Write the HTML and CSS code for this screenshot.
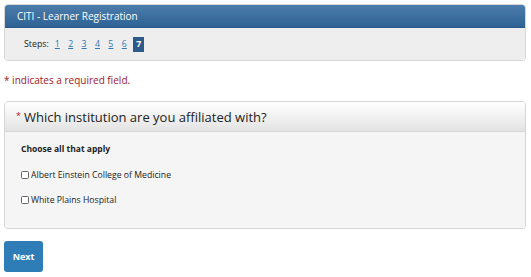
FILE: index.html
```html
<!DOCTYPE html>
<html lang="en">
<head>
<meta charset="utf-8">
<title>CITI - Learner Registration</title>
<link rel="stylesheet" href="styles.css">
</head>
<body>
<div class="page">
  <section class="panel panel-primary">
    <div class="panel-heading">CITI - Learner Registration</div>
    <div class="steps">
      <span class="steps-label">Steps:</span>
      <a class="step" href="#">1</a>
      <a class="step" href="#">2</a>
      <a class="step" href="#">3</a>
      <a class="step" href="#">4</a>
      <a class="step" href="#">5</a>
      <a class="step" href="#">6</a>
      <span class="step current">7</span>
    </div>
  </section>

  <p class="required-note"><span class="star">*</span> indicates a required field.</p>

  <section class="panel panel-question">
    <div class="question-heading"><span class="qstar">*</span>Which institution are you affiliated with?</div>
    <div class="question-body">
      <div class="choose">Choose all that apply</div>
      <label class="option"><input type="checkbox" class="box"><span>Albert Einstein College of Medicine</span></label>
      <label class="option"><input type="checkbox" class="box"><span>White Plains Hospital</span></label>
    </div>
  </section>

  <button class="btn-next" type="button">Next</button>
</div>
</body>
</html>
```

FILE: styles.css
```css
* { box-sizing: border-box; }
html, body { margin: 0; padding: 0; background: #ffffff; }
body { font-family: "Open Sans", "Noto Sans", "Liberation Sans", sans-serif; color: #222; }

.page {
  padding: 4px 5px 4px 4px;
  display: flex;
  flex-direction: column;
  align-items: flex-start;
}

.panel {
  width: 100%;
  border: 1px solid #d6d6d6;
  border-radius: 4px;
  overflow: hidden;
}

.panel-heading {
  height: 23px;
  line-height: 23px;
  padding-left: 12px;
  font-size: 10px;
  color: #ffffff;
  background: linear-gradient(#4c7cab, #2e6395);
  border-bottom: 1px solid #2b5a89;
}

.steps {
  height: 32px;
  background: #eeeeee;
  display: flex;
  align-items: center;
  padding-left: 19px;
  font-size: 8.8px;
}

.steps-label { color: #222; margin-right: 6px; }

.step {
  color: #3378b3;
  text-decoration: underline;
  width: 13.4px;
  display: inline-block;
}

.step.current {
  background: #2c5b8a;
  color: #fff;
  font-weight: 700;
  text-decoration: none;
  width: 11px;
  height: 15px;
  line-height: 15px;
  text-align: center;
  margin-left: -2px;
}

.required-note {
  margin: 12px 0 0 0;
  height: 14px;
  line-height: 14px;
  font-size: 10px;
  color: #a3161d;
}

.panel-question { margin-top: 14px; }

.question-heading {
  height: 30px;
  display: flex;
  align-items: center;
  padding-left: 11px;
  font-size: 13px;
  color: #222;
  background: linear-gradient(#ffffff, #e3e3e3);
  border-bottom: 1px solid #d9d9d9;
}

.qstar {
  color: #b3161d;
  font-size: 9px;
  margin-right: 3px;
  position: relative;
  top: -1px;
}

.question-body {
  background: #f5f5f5;
  height: 96px;
  padding: 10px 0 0 16px;
  display: flex;
  flex-direction: column;
}

.choose {
  font-size: 8.5px;
  font-weight: 700;
  height: 14px;
  line-height: 14px;
  margin-bottom: 12px;
}

.option {
  display: flex;
  align-items: center;
  height: 13px;
  margin-bottom: 12px;
  font-size: 8.7px;
  color: #222;
}

.box {
  appearance: none;
  -webkit-appearance: none;
  width: 8px;
  height: 8px;
  margin: 0 2px 0 0;
  border: 1px solid #666;
  border-radius: 1.5px;
  background: #fff;
}

.btn-next {
  margin-top: 12px;
  width: 39px;
  height: 31px;
  border: none;
  border-radius: 3px;
  background: #2f7db6;
  color: #fff;
  font-family: "Open Sans", "Noto Sans", "Liberation Sans", sans-serif;
  font-weight: 700;
  font-size: 9px;
  padding: 0;
}
```
